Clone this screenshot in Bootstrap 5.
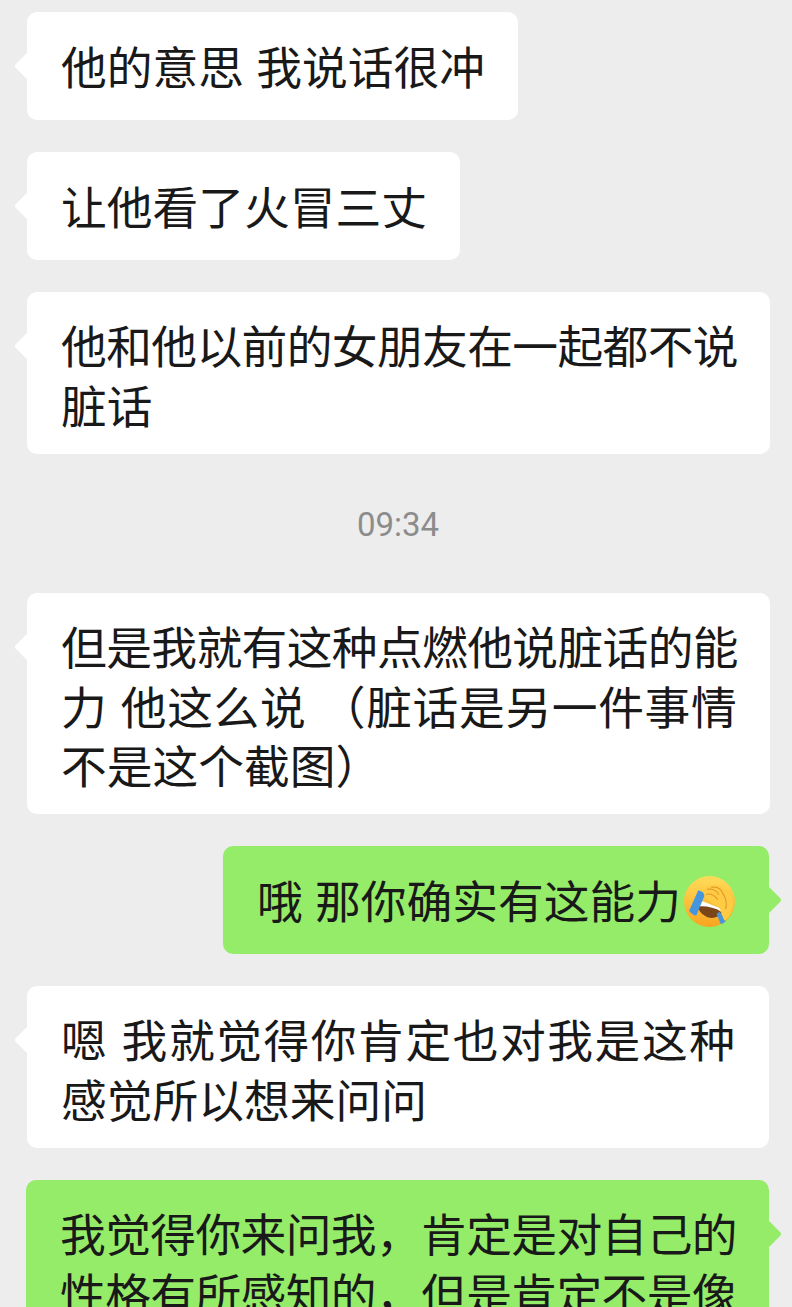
<!DOCTYPE html>
<html lang="zh-CN">
<head>
    <meta charset="UTF-8">
    <meta name="viewport" content="width=device-width, initial-scale=1.0">
    <title>聊天记录</title>
    <link href="https://cdn.jsdelivr.net/npm/bootstrap@5.3.0/dist/css/bootstrap.min.css" rel="stylesheet">
    <style>
        html, body {
            height: 1307px;
            overflow: hidden;
        }
        body {
            background-color: #ededed;
            font-family: "Noto Sans CJK SC", "Liberation Sans", sans-serif;
        }
        .chat-list {
            padding: 12px 23px 0 27px;
            gap: 32px;
        }
        .bubble {
            position: relative;
            font-size: 45.75px;
            line-height: 59.5px;
            word-spacing: 2px;
            padding: 24px 33px 24.5px 34px;
            border-radius: 10px;
            color: #191919;
            white-space: nowrap;
        }
        .bubble::after {
            content: "";
            position: absolute;
            top: 44px;
            width: 20px;
            height: 20px;
            border-radius: 3px;
            background-color: inherit;
            transform: rotate(45deg);
        }
        .bubble-in {
            background-color: #fff;
        }
        .bubble-in::after {
            left: -9px;
        }
        .bubble-out {
            background-color: #95ec69;
        }
        .bubble-out::after {
            right: -9px;
        }
        /* wrapped messages: the phone fits each line to the same width */
        .bubble-multi {
            padding: 23px 32px 20px 34px;
        }
        .bubble-multi.bubble-three {
            padding-bottom: 19.5px;
        }
        .line-tight {
            letter-spacing: -0.62px;
        }
        .line-paren {
            letter-spacing: 0.65px;
            word-spacing: 2.5px;
        }
        .line-loose {
            letter-spacing: 1.55px;
            word-spacing: 1.5px;
        }
        .time-stamp {
            font-family: Roboto, "Liberation Sans", sans-serif;
            font-size: 33px;
            line-height: 40px;
            color: #8c8c8c;
            margin: 19px 0 16px;
        }
        .emoji {
            width: 53px;
            height: 53px;
            vertical-align: -9px;
            margin-left: 2px;
        }
    </style>
</head>
<body>
    <div class="chat-list d-flex flex-column">
        <div class="bubble bubble-in align-self-start">他的意思 我说话很冲</div>
        <div class="bubble bubble-in align-self-start">让他看了火冒三丈</div>
        <div class="bubble bubble-in bubble-multi align-self-start"><span class="line-tight">他和他以前的女朋友在一起都不说</span><br>脏话</div>

        <div class="time-stamp text-center">09:34</div>

        <div class="bubble bubble-in bubble-multi bubble-three align-self-start"><span class="line-tight">但是我就有这种点燃他说脏话的能</span><br><span class="line-paren">力 他这么说 （脏话是另一件事情</span><br>不是这个截图）</div>
        <div class="bubble bubble-out align-self-end">哦 那你确实有这能力<svg class="emoji" viewBox="0 0 52 52" aria-hidden="true">
            <defs>
                <linearGradient id="faceFill" x1="0" y1="0" x2="0" y2="1">
                    <stop offset="0" stop-color="#ffdc5a"/>
                    <stop offset="1" stop-color="#f8a51f"/>
                </linearGradient>
            </defs>
            <circle cx="26" cy="26" r="25" fill="url(#faceFill)"/>
            <path d="M14 31c7-3 17-1 24 6-5 8-19 7-24-6z" fill="#7a4518"/>
            <path d="M17 25l21 8v3c-7-4-16-6-24-5z" fill="#fff"/>
            <path d="M15 15l7 3-9 22c-3-1-6-3-7-5z" fill="#4596de"/>
            <path d="M36 36l6 9c-1 2-3 3-5 3l-4-10z" fill="#4596de"/>
            <path d="M19 15c4-5 12-6 18-4 7 3 12 10 12 17 0 8-4 14-8 17-3-4-3-11-7-14-6-4-13-8-15-16z" fill="#ffcb45"/>
            <path d="M24 14c4-1 9 1 11 5M23 19c4-1 8 1 11 5M28 12c5-1 9 1 11 6M39 18c3 4 4 10 3 15" fill="none" stroke="#dc9326" stroke-width="1" stroke-linecap="round"/>
        </svg></div>
        <div class="bubble bubble-in bubble-multi align-self-start"><span class="line-loose">嗯 我就觉得你肯定也对我是这种</span><br>感觉所以想来问问</div>
        <div class="bubble bubble-out bubble-multi align-self-end"><span class="line-tight">我觉得你来问我，肯定是对自己的<br>性格有所感知的，但是肯定不是像</span></div>
    </div>
    <script src="https://cdn.jsdelivr.net/npm/bootstrap@5.3.0/dist/js/bootstrap.bundle.min.js"></script>
</body>
</html>
